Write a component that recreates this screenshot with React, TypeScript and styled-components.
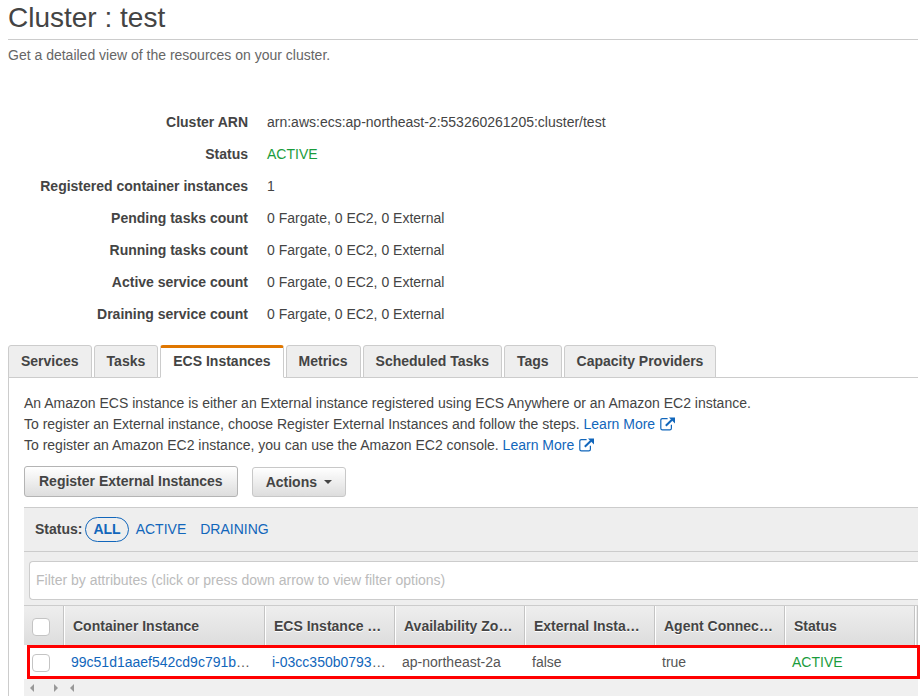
import React, { useState } from "react";
import styled, { createGlobalStyle, css } from "styled-components";

const Global = createGlobalStyle`
  * { box-sizing: border-box; }
  body {
    margin: 0;
    background: #fff;
    color: #444;
    font-family: "Liberation Sans", Arial, sans-serif;
    font-size: 14px;
    line-height: 21px;
    overflow: hidden;
  }
  button, input { font: inherit; color: inherit; }
`;

const Page = styled.main`
  padding: 0 2px 0 8px;
`;

const Title = styled.h1`
  margin: 0;
  padding-bottom: 3px;
  border-bottom: 1px solid #ccc;
  font-size: 28px;
  font-weight: 400;
  line-height: 36px;
`;

const Subtitle = styled.p`
  margin: 5px 0 40px;
  color: #666;
`;

const Details = styled.dl`
  display: grid;
  grid-template-columns: 240px 1fr;
  column-gap: 19px;
  margin: 0 0 15px;
  line-height: 32px;
`;

const Label = styled.dt`
  font-weight: 700;
  text-align: right;
`;

const Value = styled.dd<{ $ok?: boolean }>`
  margin: 0;
  ${(p) => p.$ok && "color: #1a9c3c;"}
`;

const TabList = styled.div`
  display: flex;
  gap: 2px;
  border-bottom: 1px solid #ccc;
`;

const Tab = styled.button<{ $active: boolean }>`
  height: 33px;
  margin: 0 0 -1px;
  padding: 0 12px;
  border: 1px solid #ccc;
  border-radius: 3px 3px 0 0;
  background: #eee;
  font-weight: 700;
  white-space: nowrap;
  cursor: pointer;
  ${(p) =>
    p.$active &&
    css`
      padding-bottom: 2px;
      border-top: 3px solid #e07700;
      border-bottom-color: #fff;
      background: #fff;
    `}
`;

const Panel = styled.section`
  padding: 15px 0 0 15px;
  border-left: 1px solid #ccc;
`;

const Intro = styled.p`
  margin: 0;
`;

const Link = styled.a`
  color: #1166bb;
  text-decoration: none;
  svg {
    margin-left: 5px;
    vertical-align: -2px;
  }
`;

const Actions = styled.div`
  display: flex;
  align-items: flex-end;
  gap: 14px;
  margin: 10px 0;
`;

const Button = styled.button<{ $menu?: boolean }>`
  display: flex;
  align-items: center;
  gap: 7px;
  height: ${(p) => (p.$menu ? 30 : 31)}px;
  padding: 0 ${(p) => (p.$menu ? 13 : 14)}px;
  border: 1px solid ${(p) => (p.$menu ? "#c8c8c8" : "#b4b4b4")};
  border-radius: 3px;
  background: linear-gradient(#fff, #ddd);
  font-weight: 700;
  cursor: pointer;
`;

const FilterBar = styled.div`
  display: flex;
  align-items: center;
  height: 45px;
  padding: 0 11px;
  border: solid #ccc;
  border-width: 1px 0;
  background: #eee;
`;

const StatusLabel = styled.span`
  margin-right: 3px;
  font-weight: 700;
`;

const StatusOption = styled.button<{ $on: boolean }>`
  height: 25px;
  margin: 0;
  padding: 0 7px;
  border: 1px solid ${(p) => (p.$on ? "#1166bb" : "transparent")};
  border-radius: 13px;
  background: none;
  color: #1166bb;
  font-weight: ${(p) => (p.$on ? 700 : 400)};
  cursor: pointer;
  & + & {
    padding: 0 6px;
  }
`;

const SearchArea = styled.div`
  padding: 9px 0 5px 5px;
  background: #eee;
`;

const Search = styled.input`
  display: block;
  width: 100%;
  height: 39px;
  padding: 0 6px 2px;
  border: 1px solid #ccc;
  border-right: 0;
  border-radius: 4px 0 0 4px;
  background: #fff;
  outline: 0;
  &::placeholder {
    color: #bbb;
    opacity: 1;
  }
`;

const TableWrap = styled.div`
  position: relative;
`;

const TableClip = styled.div`
  overflow: hidden;
`;

const Highlight = styled.div`
  position: absolute;
  left: 3px;
  right: -2px;
  bottom: 0;
  height: 34px;
  border: 3px solid #f00;
  pointer-events: none;
`;

const Table = styled.table`
  width: 100%;
  border-collapse: separate;
  border-spacing: 0;
  table-layout: fixed;
`;

const Col = styled.col<{ $w: number }>`
  width: ${(p) => p.$w}px;
`;

const Th = styled.th`
  height: 40px;
  padding: 2px 12px 0 9px;
  border-top: 1px solid #ccc;
  background: linear-gradient(#eee, #ddd);
  box-shadow: inset -1px 0 #c4c4c4, inset 1px 0 #fff;
  text-align: left;
  text-shadow: 0 1px #fff;
  white-space: nowrap;
  overflow: hidden;
  text-overflow: ellipsis;
  &:first-child {
    padding-left: 8px;
    box-shadow: inset -1px 0 #c4c4c4;
  }
  &:last-child {
    padding: 0;
  }
`;

const Td = styled.td<{ $ok?: boolean }>`
  height: 34px;
  padding: 0 4px 0 7px;
  color: ${(p) => (p.$ok ? "#1a9c3c" : "#555")};
  white-space: nowrap;
  &:first-child {
    padding: 1px 0 0 8px;
  }
  &:last-child {
    padding: 0;
  }
`;

const Check = styled.input`
  appearance: none;
  display: block;
  width: 18px;
  height: 18px;
  margin: 0;
  border: 1px solid #c4c4c4;
  border-radius: 4px;
  background: #fff;
  &:checked {
    background: #1166bb;
  }
`;

const ScrollTrack = styled.div`
  display: flex;
  align-items: center;
  height: 17px;
  padding-left: 6px;
  background: #f0f0f0;
`;

const ScrollButton = styled.button<{ $gap: number }>`
  display: flex;
  margin: 0 ${(p) => p.$gap}px 0 0;
  padding: 0;
  border: 0;
  background: none;
`;

function ExternalIcon() {
  return (
    <svg width="15" height="14" viewBox="0 0 15 14" fill="none" aria-hidden="true">
      <path d="M7.6 1.6H2.4Q.8 1.6.8 3.2v8Q.8 12.8 2.4 12.8h7.4q1.6 0 1.6-1.6V7.8" stroke="#1166bb" strokeWidth="1.2" />
      <path d="M5.8 8.7 12 2.8" stroke="#1166bb" strokeWidth="2" />
      <path d="M9 .5h6v6Z" fill="#1166bb" />
    </svg>
  );
}

function Arrow({ left }: { left?: boolean }) {
  return (
    <svg width="4" height="8" viewBox="0 0 4 8" aria-hidden="true">
      <path d={left ? "M4 0v8L0 4Z" : "M0 0v8l4-4Z"} fill="#999" />
    </svg>
  );
}

const counts = "0 Fargate, 0 EC2, 0 External";
const details = [
  ["Cluster ARN", "arn:aws:ecs:ap-northeast-2:553260261205:cluster/test"],
  ["Status", "ACTIVE"],
  ["Registered container instances", "1"],
  ["Pending tasks count", counts],
  ["Running tasks count", counts],
  ["Active service count", counts],
  ["Draining service count", counts],
];
const tabs = ["Services", "Tasks", "ECS Instances", "Metrics", "Scheduled Tasks", "Tags", "Capacity Providers"];
const columns = [
  "Container Instance",
  "ECS Instance …",
  "Availability Zone",
  "External Instance",
  "Agent Connected",
  "Status",
];

export default function App() {
  const [tab, setTab] = useState("ECS Instances");
  const [status, setStatus] = useState("ALL");
  return (
    <>
      <Global />
      <Page>
        <Title>Cluster : test</Title>
        <Subtitle>Get a detailed view of the resources on your cluster.</Subtitle>
        <Details>
          {details.map(([name, value]) => (
            <React.Fragment key={name}>
              <Label>{name}</Label>
              <Value $ok={value === "ACTIVE"}>{value}</Value>
            </React.Fragment>
          ))}
        </Details>
        <TabList role="tablist">
          {tabs.map((t) => (
            <Tab key={t} role="tab" aria-selected={t === tab} $active={t === tab} onClick={() => setTab(t)}>
              {t}
            </Tab>
          ))}
        </TabList>
        <Panel>
          <Intro>
            An Amazon ECS instance is either an External instance registered using ECS Anywhere or an Amazon EC2
            instance.
          </Intro>
          <Intro>
            To register an External instance, choose Register External Instances and follow the steps.{" "}
            <Link href="#external">
              Learn More
              <ExternalIcon />
            </Link>
          </Intro>
          <Intro>
            To register an Amazon EC2 instance, you can use the Amazon EC2 console.{" "}
            <Link href="#ec2">
              Learn More
              <ExternalIcon />
            </Link>
          </Intro>
          <Actions>
            <Button>Register External Instances</Button>
            <Button $menu>
              Actions
              <svg width="8" height="5" viewBox="0 0 8 5" aria-hidden="true">
                <path d="M0 0h8L4 4Z" fill="#444" />
              </svg>
            </Button>
          </Actions>
          <FilterBar>
            <StatusLabel>Status:</StatusLabel>
            {["ALL", "ACTIVE", "DRAINING"].map((s) => (
              <StatusOption key={s} $on={s === status} onClick={() => setStatus(s)}>
                {s}
              </StatusOption>
            ))}
          </FilterBar>
          <SearchArea>
            <Search
              aria-label="Filter by attributes"
              placeholder="Filter by attributes (click or press down arrow to view filter options)"
            />
          </SearchArea>
          <TableWrap>
            <TableClip>
              <Table>
                <colgroup>
                  <Col $w={40} />
                  <Col $w={201} />
                  {columns.slice(1).map((c) => (
                    <Col key={c} $w={130} />
                  ))}
                  <col />
                </colgroup>
                <thead>
                  <tr>
                    <Th>
                      <Check type="checkbox" aria-label="Select all instances" />
                    </Th>
                    {columns.map((c) => (
                      <Th key={c}>{c}</Th>
                    ))}
                    <Th />
                  </tr>
                </thead>
                <tbody>
                  <tr>
                    <Td>
                      <Check type="checkbox" aria-label="Select instance" />
                    </Td>
                    <Td>
                      <Link href="#container">99c51d1aaef542cd9c791b</Link>…
                    </Td>
                    <Td>
                      <Link href="#instance">i-03cc350b0793</Link>…
                    </Td>
                    <Td>ap-northeast-2a</Td>
                    <Td>false</Td>
                    <Td>true</Td>
                    <Td $ok>ACTIVE</Td>
                    <Td />
                  </tr>
                </tbody>
              </Table>
            </TableClip>
            <Highlight />
          </TableWrap>
          <ScrollTrack>
            <ScrollButton $gap={20} aria-label="Scroll left">
              <Arrow left />
            </ScrollButton>
            <ScrollButton $gap={12} aria-label="Scroll right">
              <Arrow />
            </ScrollButton>
            <ScrollButton $gap={0} aria-label="Scroll columns left">
              <Arrow left />
            </ScrollButton>
          </ScrollTrack>
        </Panel>
      </Page>
    </>
  );
}
